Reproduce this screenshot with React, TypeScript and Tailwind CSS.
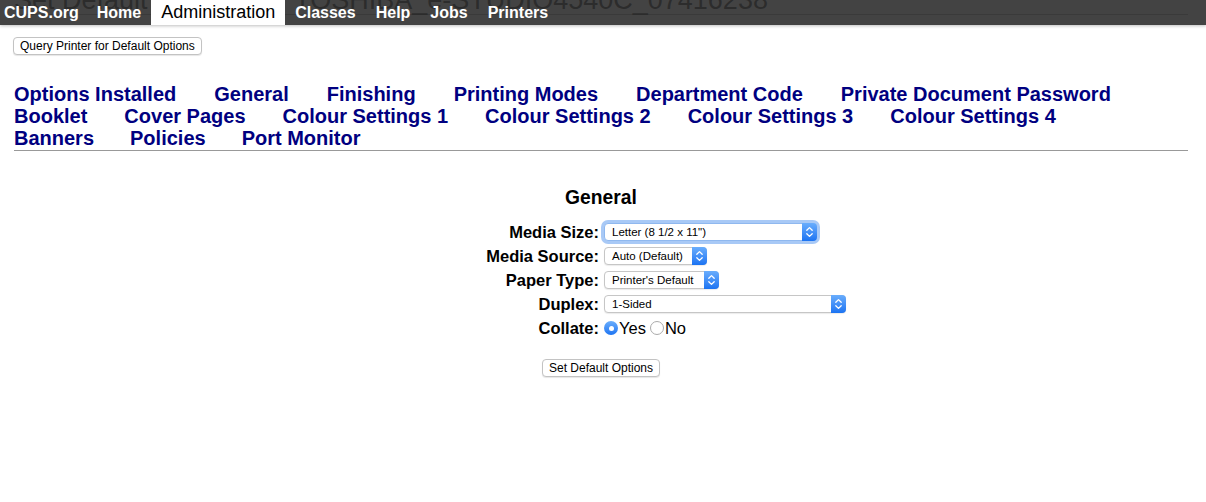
import React from 'react';

const tabRows: { items: string[]; gap: string }[] = [
  { items: ['Options Installed', 'General', 'Finishing', 'Printing Modes', 'Department Code', 'Private Document Password'], gap: 'gap-x-[38px]' },
  { items: ['Booklet', 'Cover Pages', 'Colour Settings 1', 'Colour Settings 2', 'Colour Settings 3', 'Colour Settings 4'], gap: 'gap-x-[37px]' },
  { items: ['Banners', 'Policies', 'Port Monitor'], gap: 'gap-x-[36px]' },
];

const navItems = ['Home', 'Administration', 'Classes', 'Help', 'Jobs', 'Printers'];

function Chevrons() {
  return (
    <svg width="15" height="18" viewBox="0 0 15 18" fill="none">
      <path d="M4.8 7.3 7.5 4.6 10.2 7.3" stroke="white" strokeWidth="1.3" strokeLinecap="round" strokeLinejoin="round" />
      <path d="M4.8 10.7 7.5 13.4 10.2 10.7" stroke="white" strokeWidth="1.3" strokeLinecap="round" strokeLinejoin="round" />
    </svg>
  );
}

function PopUp({ value, width, focused }: { value: string; width: string; focused?: boolean }) {
  return (
    <div
      className={`${width} h-[18px] flex items-stretch rounded-[4px] bg-white border ${
        focused ? 'border-[#8fb8ef] shadow-[0_0_0_3px_rgba(110,165,240,0.6)]' : 'border-[#c6c6c6] shadow-[0_1px_1px_rgba(0,0,0,0.08)]'
      }`}
    >
      <span className="flex-1 pl-[7px] text-[11.5px] leading-[16px] text-black whitespace-nowrap overflow-hidden">{value}</span>
      <span className="w-[15px] -my-px -mr-px rounded-r-[4px] bg-linear-to-b from-[#69adfc] to-[#1a73f2] flex items-center justify-center">
        <Chevrons />
      </span>
    </div>
  );
}

function MacButton({ label }: { label: string }) {
  return (
    <button className="block h-[18px] px-[6px] rounded-[4px] border border-[#c3c3c3] bg-white text-[12px] leading-[16px] text-black shadow-[0_1px_1px_rgba(0,0,0,0.1)] font-['Liberation_Sans',Arial,sans-serif]">
      {label}
    </button>
  );
}

function Radio({ checked }: { checked?: boolean }) {
  if (checked) {
    return (
      <span className="shrink-0 w-[14px] h-[14px] rounded-full bg-linear-to-b from-[#6aaefc] to-[#1b74f2] flex items-center justify-center">
        <span className="block w-[5px] h-[5px] rounded-full bg-white" />
      </span>
    );
  }
  return <span className="shrink-0 block w-[14px] h-[14px] rounded-full bg-white border border-[#ababab]" />;
}

export default function App() {
  return (
    <div className="relative min-h-[502px] bg-white font-['Liberation_Sans',Arial,sans-serif] text-black overflow-hidden">
      <div className="ml-[14px] mr-[18px]">
        <h1 className="-mt-[12px] text-[27px] leading-[24px] pb-[2px] border-b border-[#999] font-normal whitespace-nowrap">
          Set Default Options for TOSHIBA_e-STUDIO4540C_07416238
        </h1>

        <div className="mt-[22px] -ml-px flex">
          <MacButton label="Query Printer for Default Options" />
        </div>

        <div className="mt-[28px] pb-px border-b border-[#999]">
          {tabRows.map((row, i) => (
            <div key={i} className={`flex ${row.gap} text-[20px] leading-[22px] font-bold text-[#000080] whitespace-nowrap`}>
              {row.items.map((t) => (
                <a key={t} href="#" className="text-[#000080]">
                  {t}
                </a>
              ))}
            </div>
          ))}
        </div>

        <h2 className="mt-[36px] text-center text-[19.3px] leading-[22px] font-bold">General</h2>

        <div className="mt-[11px] mx-auto w-[500px] grid grid-cols-2 text-[16.5px]">
          <div className="h-[24px] flex items-center justify-end pr-[2px] font-bold">Media Size:</div>
          <div className="h-[24px] flex items-center pl-[3px]">
            <PopUp value={'Letter (8 1/2 x 11")'} width="w-[213px]" focused />
          </div>

          <div className="h-[24px] flex items-center justify-end pr-[2px] font-bold">Media Source:</div>
          <div className="h-[24px] flex items-center pl-[3px]">
            <PopUp value="Auto (Default)" width="w-[103px]" />
          </div>

          <div className="h-[24px] flex items-center justify-end pr-[2px] font-bold">Paper Type:</div>
          <div className="h-[24px] flex items-center pl-[3px]">
            <PopUp value="Printer's Default" width="w-[115px]" />
          </div>

          <div className="h-[24px] flex items-center justify-end pr-[2px] font-bold">Duplex:</div>
          <div className="h-[24px] flex items-center pl-[3px]">
            <PopUp value="1-Sided" width="w-[242px]" />
          </div>

          <div className="h-[24px] flex items-center justify-end pr-[2px] font-bold">Collate:</div>
          <div className="h-[24px] flex items-center pl-[3px] gap-x-[1px]">
            <Radio checked />
            <span>Yes</span>
            <span className="ml-[3px]">
              <Radio />
            </span>
            <span>No</span>
          </div>
        </div>

        <div className="mt-[19px] flex justify-center">
          <MacButton label="Set Default Options" />
        </div>
      </div>

      <div className="absolute top-0 left-0 right-0 h-[25px] bg-[rgba(48,48,48,0.91)] shadow-[0_1px_3px_rgba(0,0,0,0.25)] flex items-stretch text-[16px]">
        <a href="#" className="pl-[4px] pr-[8px] flex items-center font-bold text-white">
          CUPS.org
        </a>
        {navItems.map((item) =>
          item === 'Administration' ? (
            <a key={item} href="#" className="px-[10px] flex items-center bg-white text-black text-[18px]">
              {item}
            </a>
          ) : (
            <a key={item} href="#" className="px-[10px] flex items-center font-bold text-white">
              {item}
            </a>
          ),
        )}
      </div>
    </div>
  );
}
